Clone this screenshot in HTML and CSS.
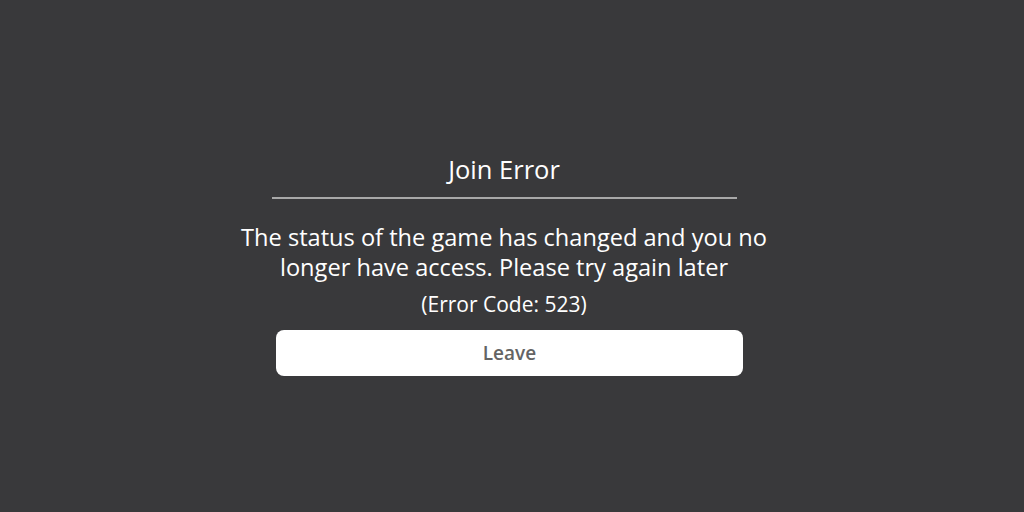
FILE: index.html
```html
<!DOCTYPE html>
<html>
<head>
<meta charset="utf-8">
<link rel="stylesheet" href="styles.css">
</head>
<body>
<div class="screen">
  <div class="dialog">
    <div class="title">Join Error</div>
    <div class="divider"></div>
    <p class="message">The status of the game has changed and you no longer have access. Please try again later</p>
    <p class="code">(Error Code: 523)</p>
    <button class="leave">Leave</button>
  </div>
</div>
</body>
</html>
```
FILE: styles.css
```css
html, body {
  margin: 0;
  padding: 0;
  background: #39393b;
}
.screen {
  height: 512px;
  display: flex;
  justify-content: center;
  padding-right: 16px;
  box-sizing: border-box;
  font-family: "Open Sans", "Noto Sans", sans-serif;
  color: #ffffff;
}
.dialog {
  width: 560px;
  margin-top: 153px;
  display: flex;
  flex-direction: column;
  align-items: center;
}
.title {
  font-size: 25.5px;
  line-height: 32px;
  height: 32px;
}
.divider {
  width: 465px;
  height: 2px;
  background: #a8a8a8;
  margin-top: 12px;
}
.message {
  margin: 23px 0 0;
  font-size: 23.6px;
  line-height: 30px;
  text-align: center;
  width: 560px;
}
.code {
  margin: 8px 0 0;
  font-size: 21px;
  line-height: 28px;
}
.leave {
  margin: 12px 0 0 11px;
  width: 467px;
  height: 46px;
  border: none;
  border-radius: 8px;
  background: #ffffff;
  color: #646464;
  font-family: "Open Sans", "Noto Sans", sans-serif;
  font-size: 19px;
  font-weight: 600;
}
```
